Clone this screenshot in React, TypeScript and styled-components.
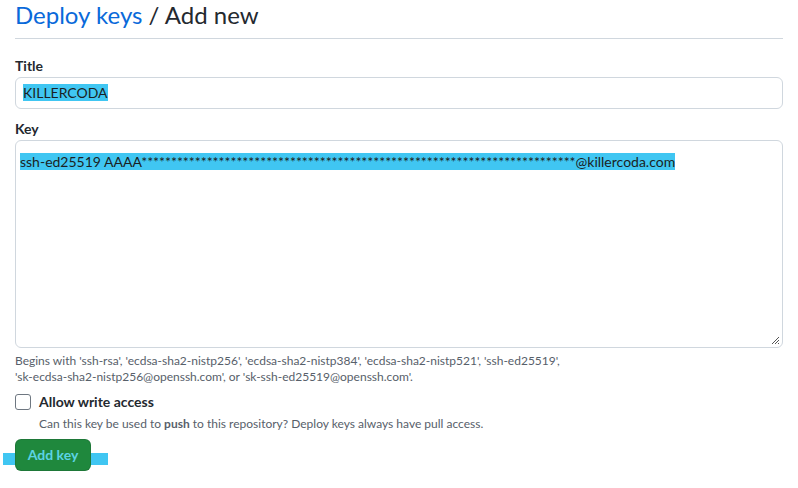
import * as React from 'react';
import styled, { createGlobalStyle } from 'styled-components';

const GlobalStyle = createGlobalStyle`
  html, body {
    margin: 0;
    padding: 0;
    background: #ffffff;
  }
  body {
    font-family: Lato, "Liberation Sans", sans-serif;
    color: #24292f;
  }
`;

const SELECTION = '#40c6f2';

const Page = styled.div`
  padding: 0 15px;
  width: 768px;
`;

const Subhead = styled.div`
  display: flex;
  align-items: baseline;
  padding-bottom: 8px;
  border-bottom: 1px solid #d0d7de;
`;

const Heading = styled.h2`
  margin: 0;
  font-size: 24px;
  font-weight: 400;
  line-height: 30px;
  color: #24292f;
`;

const HeadLink = styled.a`
  color: #0969da;
  text-decoration: none;
`;

const FormGroup = styled.div<{ $top: number }>`
  margin-top: ${p => p.$top}px;
`;

const Label = styled.label`
  display: block;
  font-size: 14px;
  font-weight: 700;
  line-height: 20px;
  margin-bottom: 1px;
`;

const Field = styled.div<{ $height: number; $padX: number; $padY: number }>`
  box-sizing: border-box;
  position: relative;
  height: ${p => p.$height}px;
  padding: ${p => p.$padY}px ${p => p.$padX}px;
  border: 1px solid #d0d7de;
  border-radius: 6px;
  background: #ffffff;
  font-size: 14px;
  line-height: 20px;
  color: #24292f;
  white-space: nowrap;
  overflow: hidden;
`;

const Selected = styled.span`
  background: ${SELECTION};
  color: #1b1f24;
`;

const Grip = styled.svg`
  position: absolute;
  right: 2px;
  bottom: 2px;
`;

const Note = styled.p`
  margin: 5px 0 0;
  font-size: 12px;
  line-height: 16px;
  color: #57606a;
`;

const CheckRow = styled.div`
  display: flex;
  align-items: center;
  gap: 8px;
  margin-top: 7px;
`;

const Box = styled.span`
  box-sizing: border-box;
  width: 16px;
  height: 16px;
  border: 1px solid #6e7781;
  border-radius: 3px;
  background: #ffffff;
`;

const CheckLabel = styled.span`
  font-size: 14px;
  font-weight: 700;
  line-height: 20px;
`;

const CheckNote = styled.p`
  margin: 4px 0 0 24px;
  font-size: 12px;
  line-height: 16px;
  color: #57606a;
`;

const ButtonRow = styled.div`
  position: relative;
  margin-top: 7px;
  display: inline-block;
  &::before {
    content: '';
    position: absolute;
    left: -12px;
    right: -17px;
    top: 14px;
    height: 12px;
    background: ${SELECTION};
  }
`;

const Button = styled.button`
  position: relative;
  box-sizing: border-box;
  height: 32px;
  width: 76px;
  padding: 0;
  border: 1px solid rgba(27, 31, 36, 0.15);
  border-radius: 6px;
  background: #1f883d;
  color: #5cd3e4;
  font-family: inherit;
  font-size: 14px;
  font-weight: 700;
  line-height: 20px;
`;

const keyText = '*'.repeat(73);

export default function App() {
  return (
    <>
      <GlobalStyle />
      <Page>
        <Subhead>
          <Heading>
            <HeadLink href="#">Deploy keys</HeadLink> / Add new
          </Heading>
        </Subhead>

        <FormGroup $top={17}>
          <Label>Title</Label>
          <Field $height={32} $padX={7} $padY={5}>
            <Selected>KILLERCODA</Selected>
          </Field>
        </FormGroup>

        <FormGroup $top={10}>
          <Label>Key</Label>
          <Field $height={208} $padX={4} $padY={11}>
            <Selected>ssh-ed25519 AAAA{keyText}@killercoda.com</Selected>
            <Grip width="10" height="10" viewBox="0 0 10 10">
              <path d="M9 2 L2 9 M9 5 L5 9 M9 8 L8 9" stroke="#555" strokeWidth="1" />
            </Grip>
          </Field>
          <Note>
            Begins with 'ssh-rsa', 'ecdsa-sha2-nistp256', 'ecdsa-sha2-nistp384', 'ecdsa-sha2-nistp521', 'ssh-ed25519',
            <br />
            'sk-ecdsa-sha2-nistp256@openssh.com', or 'sk-ssh-ed25519@openssh.com'.
          </Note>
        </FormGroup>

        <CheckRow>
          <Box />
          <CheckLabel>Allow write access</CheckLabel>
        </CheckRow>
        <CheckNote>
          Can this key be used to <b>push</b> to this repository? Deploy keys always have pull access.
        </CheckNote>

        <ButtonRow>
          <Button>Add key</Button>
        </ButtonRow>
      </Page>
    </>
  );
}
